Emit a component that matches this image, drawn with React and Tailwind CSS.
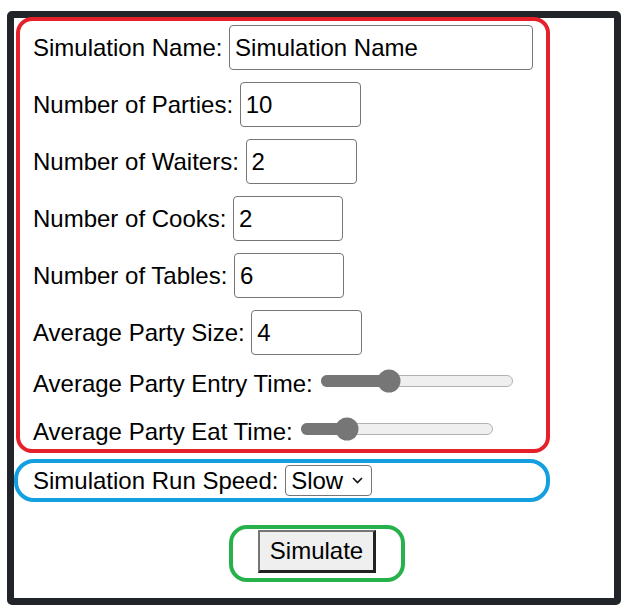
import React from "react";

function Field({ label, value, width }) {
  return (
    <div className="flex items-center gap-[6.7px] h-[45px]">
      <span className="whitespace-nowrap">{label}</span>
      <div
        className="h-[45px] border border-[#767676] rounded-[4px] pl-[5px] flex items-center bg-white"
        style={{ width }}
      >
        <span className="whitespace-nowrap">{value}</span>
      </div>
    </div>
  );
}

function Slider({ label, pos, className }) {
  return (
    <div className={"flex items-center gap-[8.7px] h-[30px] " + className}>
      <span className="whitespace-nowrap mt-[5px]">{label}</span>
      <div className="relative w-[192px] h-[12px]">
        <div className="absolute inset-0 rounded-full bg-[#efefef] border border-[#b2b2b2]" />
        <div
          className="absolute left-0 top-0 h-full rounded-full bg-[#767676]"
          style={{ width: pos }}
        />
        <div
          className="absolute top-1/2 w-[23px] h-[23px] -translate-x-1/2 -translate-y-1/2 rounded-full bg-[#767676]"
          style={{ left: pos }}
        />
      </div>
    </div>
  );
}

export default function App() {
  return (
    <div
      className="w-[628px] h-[612px] bg-white pl-[7px] pt-[11px] text-[24px] text-black leading-normal"
      style={{ fontFamily: '"Liberation Sans", Arial, sans-serif' }}
    >
      <div className="w-[614px] h-[594px] border-[7px] border-[#212428] rounded-[5px] bg-white flex flex-col">
        <div className="ml-[2px] -mt-[1px] w-[534px] h-[436px] border-[4px] border-[#e6202a] rounded-[16px] pl-[13px] pt-[4px] flex flex-col">
          <div className="flex flex-col gap-[12px]">
            <Field label="Simulation Name:" value="Simulation Name" width={304} />
            <Field label="Number of Parties:" value="10" width={121} />
            <Field label="Number of Waiters:" value="2" width={111} />
            <Field label="Number of Cooks:" value="2" width={110} />
            <Field label="Number of Tables:" value="6" width={110} />
            <Field label="Average Party Size:" value="4" width={111} />
          </div>
          <Slider label="Average Party Entry Time:" pos={68} className="mt-[11px]" />
          <Slider label="Average Party Eat Time:" pos={46} className="mt-[18px]" />
        </div>
        <div className="mt-[6px] w-[536px] h-[43px] border-[4px] border-[#14a0e0] rounded-[20px] pl-[15px] flex items-center">
          <span className="whitespace-nowrap">Simulation Run Speed:</span>
          <div className="ml-[6.7px] w-[87px] h-[31px] border border-[#767676] rounded-[4px] bg-white flex items-center pl-[5px] pr-[8px] justify-between">
            <span>Slow</span>
            <svg width="11" height="7" viewBox="0 0 11 7" fill="none">
              <path d="M1 1 L5.5 5.5 L10 1" stroke="#111" strokeWidth="1.6" />
            </svg>
          </div>
        </div>
        <div className="mt-[23px] ml-[215px] w-[176px] h-[57px] border-[4px] border-[#27b14b] rounded-[18px] flex justify-center items-start pt-[1px]">
          <div className="w-[118px] h-[43px] bg-[#efefef] border-2 border-t-[#767676] border-l-[#767676] border-r-[#222] border-b-[#222] border-r-[3px] border-b-[3px] flex items-center justify-center">
            Simulate
          </div>
        </div>
      </div>
    </div>
  );
}
